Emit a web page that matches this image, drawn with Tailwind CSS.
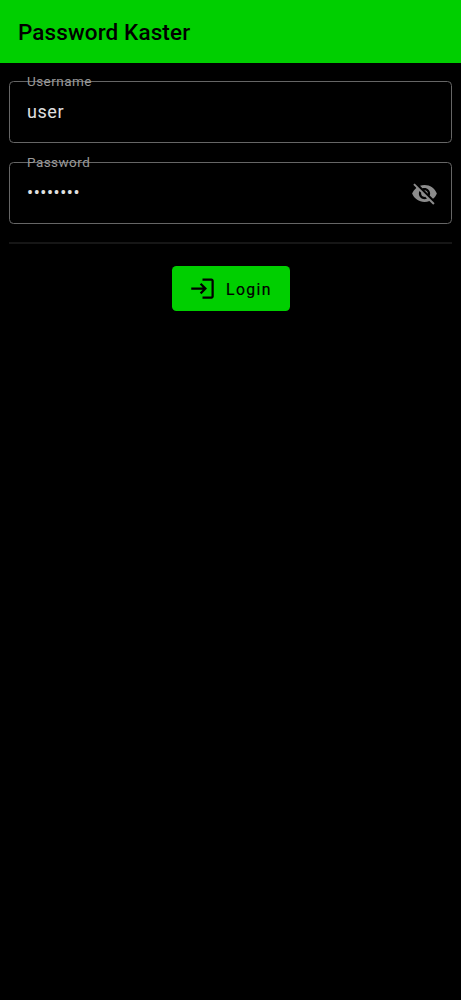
<!DOCTYPE html>
<html lang="en">
<head>
<meta charset="utf-8">
<title>Password Kaster</title>
<script src="https://cdn.jsdelivr.net/npm/@tailwindcss/browser@4"></script>
</head>
<body class="min-h-screen bg-black font-[Roboto,sans-serif]">
<header class="flex h-[63px] items-center bg-[#00cf00] px-[18px] pt-[2px]">
  <h1 class="text-[22.5px] font-medium leading-[27px] tracking-[0.12px] text-black">Password Kaster</h1>
</header>
<main class="flex flex-col px-[9px] pt-[18px]">
  <div class="relative flex h-[62px] items-center rounded-[4.5px] border border-[#666] px-[17px]">
    <label class="absolute -top-[9px] left-[17px] text-[13.5px] leading-4 tracking-[0.45px] text-[#999]">Username</label>
    <span class="text-[18px] leading-6 tracking-[0.56px] text-[#e0e0e0]">user</span>
  </div>
  <div class="relative mt-[19px] flex h-[62px] items-center justify-between rounded-[4.5px] border border-[#666] pl-[17px] pr-[13px]">
    <label class="absolute -top-[9px] left-[17px] text-[13.5px] leading-4 tracking-[0.45px] text-[#999]">Password</label>
    <span class="text-[18px] leading-6 tracking-[0.56px] text-[#e0e0e0]">••••••••</span>
    <svg class="size-[27px]" viewBox="0 0 24 24" fill="#8c8c8c"><path d="M12 7c2.76 0 5 2.24 5 5 0 .65-.13 1.26-.36 1.83l2.92 2.92c1.51-1.26 2.7-2.89 3.43-4.75-1.73-4.39-6-7.5-11-7.5-1.4 0-2.74.25-3.98.7l2.16 2.16C10.74 7.13 11.35 7 12 7zM2 4.27l2.28 2.28.46.46C3.08 8.3 1.78 10.02 1 12c1.73 4.39 6 7.5 11 7.5 1.55 0 3.03-.3 4.38-.84l.42.42L19.73 22 21 20.73 3.27 3 2 4.27zM7.53 9.8l1.55 1.55c-.05.21-.08.43-.08.65 0 1.66 1.34 3 3 3 .22 0 .44-.03.65-.08l1.55 1.55c-.67.33-1.41.53-2.2.53-2.76 0-5-2.24-5-5 0-.79.2-1.53.53-2.2zm4.31-.78 3.15 3.15.02-.16c0-1.66-1.34-3-3-3l-.17.01z"/></svg>
  </div>
  <div class="mt-[18px] h-[2px] bg-[#161616]"></div>
  <button class="mt-[22px] flex h-[45px] w-[118px] items-center self-center rounded-[4.5px] bg-[#00cf00] pl-[17.5px] text-black">
    <svg class="size-[27px]" viewBox="0 0 24 24"><path d="M11 7 9.6 8.4l2.6 2.6H2v2h10.2l-2.6 2.6L11 17l5-5-5-5zm9 12h-8v2h8c1.1 0 2-.9 2-2V5c0-1.1-.9-2-2-2h-8v2h8v14z"/></svg>
    <span class="ml-[10px] pt-[2px] text-[15.75px] font-normal leading-5 tracking-[1.41px] [-webkit-text-stroke:0.2px_#000]">Login</span>
  </button>
</main>
</body>
</html>
